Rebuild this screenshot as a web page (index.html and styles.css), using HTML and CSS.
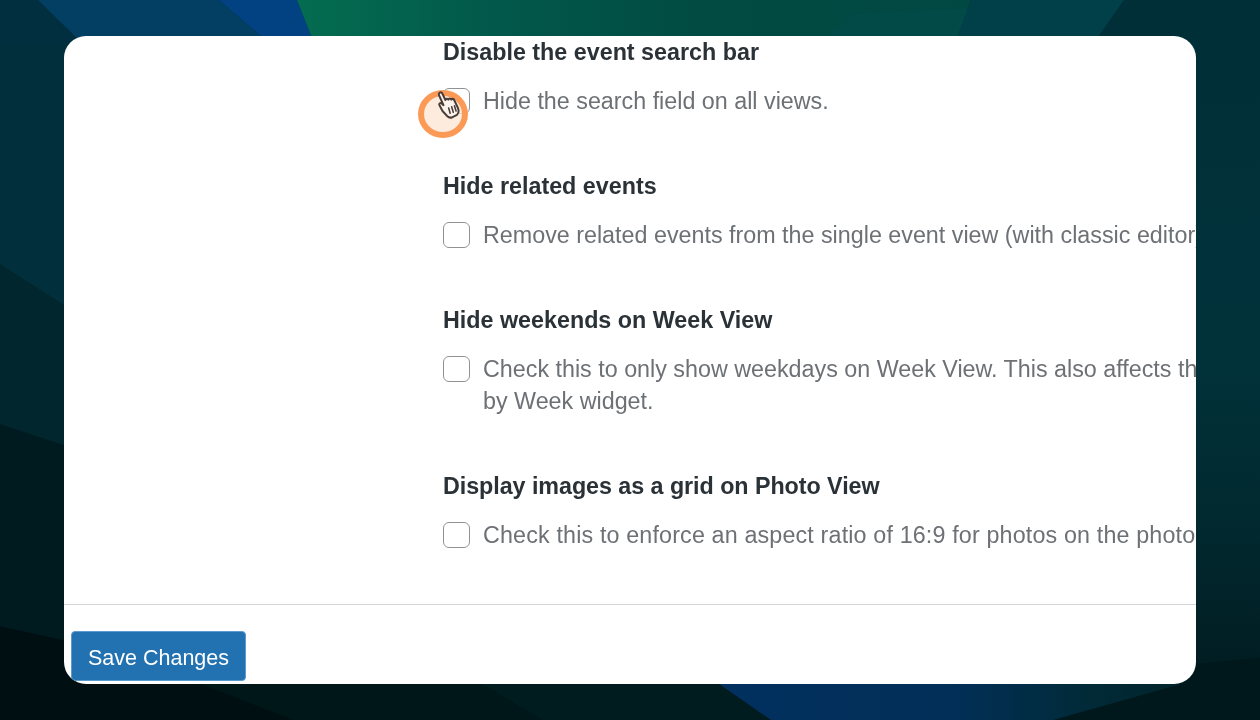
FILE: index.html
```html
<!DOCTYPE html>
<html lang="en">
<head>
<meta charset="utf-8">
<title>Settings</title>
<link rel="stylesheet" href="styles.css">
</head>
<body>
<svg class="wallpaper" viewBox="0 0 1260 720" preserveAspectRatio="none" aria-hidden="true">
  <defs>
    <linearGradient id="green" gradientUnits="userSpaceOnUse" x1="300" y1="0" x2="970" y2="0">
      <stop offset="0" stop-color="#046c50"/>
      <stop offset="0.3" stop-color="#02584a"/>
      <stop offset="0.6" stop-color="#014b42"/>
      <stop offset="1" stop-color="#014842"/>
    </linearGradient>
    <linearGradient id="bluelow" gradientUnits="userSpaceOnUse" x1="720" y1="0" x2="1180" y2="0">
      <stop offset="0" stop-color="#02305f"/>
      <stop offset="0.5" stop-color="#022f58"/>
      <stop offset="0.8" stop-color="#012a38"/>
      <stop offset="1" stop-color="#01242a"/>
    </linearGradient>
    <linearGradient id="rightside" x1="0" y1="0" x2="0" y2="1">
      <stop offset="0" stop-color="#012f38"/>
      <stop offset="0.5" stop-color="#01323a"/>
      <stop offset="0.8" stop-color="#01282e"/>
      <stop offset="1" stop-color="#011d22"/>
    </linearGradient>
  </defs>
  <rect width="1260" height="720" fill="#012f3d"/>
  <!-- top edge -->
  <polygon points="0,0 38,0 82,43 0,43" fill="#012f40"/>
  <polygon points="38,0 219,0 269,43 82,43" fill="#023f62"/>
  <polygon points="219,0 297,0 314,43 269,43" fill="#024282"/>
  <polygon points="297,0 971,0 955,43 314,43" fill="url(#green)"/>
  <polygon points="819,43 855,14 975,8 955,43" fill="#014a48"/>
  <polygon points="971,0 1124,0 1094,43 955,43" fill="#013f49"/>
  <polygon points="1124,0 1260,0 1260,43 1094,43" fill="#012f38"/>
  <!-- right side -->
  <rect x="1196" y="43" width="64" height="621" fill="url(#rightside)"/>
  <polygon points="1196,664 1260,658 1260,720 1196,720" fill="#00181c"/>
  <!-- left side -->
  <polygon points="0,43 64,43 64,305 0,264" fill="#01303c"/>
  <polygon points="0,264 64,305 64,445 0,424" fill="#01262d"/>
  <polygon points="0,424 64,445 64,640 0,626" fill="#001b20"/>
  <polygon points="0,626 64,640 64,720 0,720" fill="#000f12"/>
  <!-- bottom edge -->
  <polygon points="64,660 800,660 800,720 64,720" fill="#000f12"/>
  <polygon points="800,660 1196,660 1196,720 800,720" fill="#00181c"/>
  <polygon points="201,684 482,684 542,720 293,720" fill="#00171a"/>
  <polygon points="482,684 719,684 771,720 542,720" fill="#001c1f"/>
  <polygon points="719,684 1181,684 1053,720 771,720" fill="url(#bluelow)"/>
</svg>

<main class="card">
  <div class="scroll">
    <section class="option">
      <h3 class="option-title">Disable the event search bar</h3>
      <label class="check">
        <span class="box"></span>
        <span class="check-text">Hide the search field on all views.</span>
      </label>
    </section>
    <section class="option">
      <h3 class="option-title">Hide related events</h3>
      <label class="check">
        <span class="box"></span>
        <span class="check-text">Remove related events from the single event view (with classic editor)</span>
      </label>
    </section>
    <section class="option">
      <h3 class="option-title">Hide weekends on Week View</h3>
      <label class="check">
        <span class="box"></span>
        <span class="check-text">Check this to only show weekdays on Week View. This also affects the Events<br>by Week widget.</span>
      </label>
    </section>
    <section class="option">
      <h3 class="option-title option-title-tight">Display images as a grid on Photo View</h3>
      <label class="check">
        <span class="box"></span>
        <span class="check-text check-text-wide">Check this to enforce an aspect ratio of 16:9 for photos on the photo view.</span>
      </label>
    </section>
  </div>
  <footer class="actions">
    <button class="save" type="button">Save Changes</button>
  </footer>

  <div class="click-ring"></div>
  <svg class="hand" viewBox="1 1 28 34" preserveAspectRatio="none" aria-hidden="true">
    <path d="M3 3c1.4-.9 2.8-.2 3.4 1.2l3.6 7.4c.2-1.8 2.8-2.2 3.6-.5.3-1.6 2.9-1.8 3.6 0 .6-1.3 2.9-1.2 3.5.5l4.6 9.4c1.4 3.2.8 6-1.2 8l-6 3c-2.4.6-4.4 0-6-1.6L6.5 24.5 2.8 17.6c-.8-1.6 1.2-3.2 2.7-2l2.2 2L2.2 6C1.8 4.8 2.2 3.6 3 3z" fill="#fbf3ec" stroke="#4a3d36" stroke-width="2.4" stroke-linejoin="round"/>
    <path d="M14 21l1.8 6M17.6 19.6l2 6.2M21 18.4l2 6" stroke="#4a3d36" stroke-width="1.9" fill="none" stroke-linecap="round"/>
  </svg>
</main>
</body>
</html>
```
FILE: styles.css
```css
* { box-sizing: border-box; }

html, body {
  margin: 0;
  height: 720px;
  overflow: hidden;
}

body {
  position: relative;
  padding: 36px 64px;
  font-family: "Liberation Sans", Arial, sans-serif;
  background: #012f3d;
}

.wallpaper {
  position: absolute;
  inset: 0;
  width: 1260px;
  height: 720px;
  display: block;
}

.card {
  position: relative;
  width: 1132px;
  height: 648px;
  background: #fff;
  border-radius: 22px;
  overflow: hidden;
  display: flex;
  flex-direction: column;
}

.scroll {
  height: 569px;
  padding-left: 379px;
  border-bottom: 1.5px solid #d3d4d6;
  filter: blur(0.3px);
}

.option { height: 134px; }
.option:nth-child(3) { height: 166px; }

.option-title {
  margin: 0;
  padding-top: 3px;
  font-size: 23.3px;
  line-height: 27px;
  font-weight: 700;
  color: #2a3237;
}

.option-title-tight { letter-spacing: -0.05px; }

.check {
  display: flex;
  align-items: flex-start;
  margin-top: 19px;
  white-space: nowrap;
}

.box {
  flex: none;
  width: 27px;
  height: 26.5px;
  margin-top: 2.5px;
  border: 1.75px solid #909396;
  border-radius: 6px;
  background: #fff;
}

.check-text {
  margin-left: 13px;
  font-size: 23.3px;
  line-height: 32px;
  color: #6d7175;
}

.check-text-wide { letter-spacing: 0.15px; }

.actions {
  flex: 1;
  padding: 26px 0 0 7px;
  filter: blur(0.3px);
}

.save {
  display: block;
  width: 175px;
  height: 50px;
  padding: 3px 0 0;
  font: 400 21.5px/44px "Liberation Sans", Arial, sans-serif;
  color: #fff;
  background: #2271b1;
  border: 1px solid #5b9bd0;
  border-radius: 4px;
}

.click-ring {
  position: absolute;
  left: 354px;
  top: 54px;
  width: 50px;
  height: 48px;
  border-radius: 50%;
  border: 6.5px solid #fb9a56;
  background: rgba(252, 228, 210, 0.75);
}

.hand {
  position: absolute;
  left: 374px;
  top: 55px;
  width: 23px;
  height: 29px;
  filter: blur(0.4px);
}
```
